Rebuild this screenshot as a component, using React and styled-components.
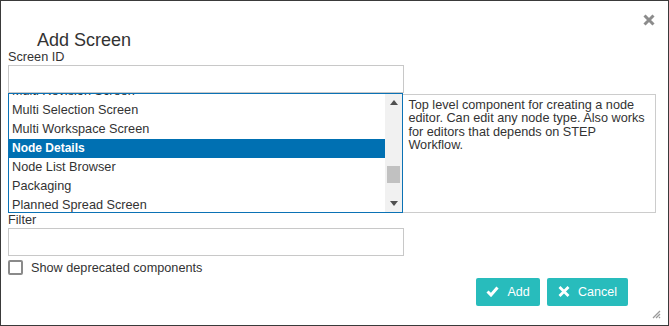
import React from "react";
import styled, { createGlobalStyle } from "styled-components";

const GlobalStyle = createGlobalStyle`
  html, body {
    margin: 0;
    padding: 0;
    background: #ffffff;
  }
  body {
    font-family: "Liberation Sans", Arial, sans-serif;
    color: #333333;
  }
`;

const Dialog = styled.div`
  position: relative;
  box-sizing: border-box;
  width: 669px;
  height: 326px;
  border: 1px solid #3a3a3a;
  background: #ffffff;
  padding: 0 12px 0 7px;
  display: flex;
  flex-direction: column;
`;

const CloseButton = styled.button`
  position: absolute;
  top: 13px;
  right: 13px;
  width: 12px;
  height: 12px;
  padding: 0;
  border: none;
  background: none;
  display: flex;
  cursor: pointer;
`;

const Grip = styled.div`
  position: absolute;
  right: 7px;
  bottom: 6px;
  width: 11px;
  height: 11px;
  display: flex;
`;

const Title = styled.h2`
  margin: 29px 0 0 29px;
  font-size: 18px;
  line-height: 20px;
  font-weight: normal;
  color: #333333;
`;

const Label = styled.label`
  display: block;
  font-size: 12.7px;
  line-height: 15px;
  color: #333333;
`;

const TextInput = styled.input`
  box-sizing: border-box;
  width: 396px;
  height: 28px;
  margin: 0;
  border: 1px solid #c8c8c8;
  background: #ffffff;
  padding: 0 6px;
  font: inherit;
  outline: none;
`;

const PickerRow = styled.div`
  display: flex;
  align-items: flex-start;
`;

const ListBox = styled.div`
  box-sizing: border-box;
  width: 396px;
  height: 120px;
  border: 1px solid #0b72b5;
  display: flex;
  overflow: hidden;
`;

const ListItems = styled.div`
  flex: 1;
  overflow: hidden;
`;

const ListInner = styled.div`
  margin-top: -12px;
`;

const Item = styled.div`
  height: 19px;
  line-height: 19px;
  padding-left: 3px;
  font-size: ${(p) => (p.$selected ? "12px" : "12.7px")};
  font-weight: ${(p) => (p.$selected ? "bold" : "normal")};
  color: ${(p) => (p.$selected ? "#ffffff" : "#333333")};
  background: ${(p) => (p.$selected ? "#0070b2" : "transparent")};
  white-space: nowrap;
`;

const ScrollBar = styled.div`
  width: 17px;
  background: #f1f1f1;
  display: flex;
  flex-direction: column;
`;

const ScrollArrow = styled.div`
  height: 17px;
  display: flex;
  align-items: center;
  justify-content: center;
`;

const ScrollTrack = styled.div`
  flex: 1;
  display: flex;
  justify-content: center;
`;

const Thumb = styled.div`
  width: 13px;
  height: 17px;
  margin-top: 55px;
  background: #c1c1c1;
`;

const Description = styled.div`
  box-sizing: border-box;
  width: 253px;
  height: 119px;
  margin-top: 1px;
  border: 1px solid #cccccc;
  border-left: none;
  padding: 4px 8px 0 5px;
  font-size: 12.7px;
  line-height: 13.3px;
  color: #333333;
`;

const CheckRow = styled.label`
  display: flex;
  align-items: center;
  gap: 8px;
  margin-top: 4px;
  font-size: 12.7px;
  color: #333333;
`;

const CheckBox = styled.span`
  box-sizing: border-box;
  width: 15px;
  height: 15px;
  border: 2px solid #8a8a8a;
  border-radius: 2px;
  background: #ffffff;
`;

const Actions = styled.div`
  display: flex;
  justify-content: flex-end;
  gap: 7px;
  margin-top: 3px;
  padding-right: 28px;
`;

const ActionButton = styled.button`
  box-sizing: border-box;
  height: 28px;
  width: ${(p) => p.$w}px;
  border: none;
  border-radius: 2px;
  background: #28bcbc;
  color: #ffffff;
  font-family: "Liberation Sans", Arial, sans-serif;
  font-size: 12.5px;
  display: flex;
  align-items: center;
  justify-content: center;
  gap: 8px;
  padding: 0 0 1px 0;
  cursor: pointer;
`;

const items = [
  "Multi Revision Screen",
  "Multi Selection Screen",
  "Multi Workspace Screen",
  "Node Details",
  "Node List Browser",
  "Packaging",
  "Planned Spread Screen",
];

export default function App() {
  return (
    <>
      <GlobalStyle />
      <Dialog>
        <CloseButton aria-label="Close">
          <svg width="12" height="12" viewBox="0 0 12 12">
            <path d="M1.5 1.5 L10.5 10.5 M10.5 1.5 L1.5 10.5" stroke="#8c8c8c" strokeWidth="3" />
          </svg>
        </CloseButton>

        <Title>Add Screen</Title>
        <Label>Screen ID</Label>
        <TextInput />

        <PickerRow>
          <ListBox>
            <ListItems>
              <ListInner>
                {items.map((it) => (
                  <Item key={it} $selected={it === "Node Details"}>
                    {it}
                  </Item>
                ))}
              </ListInner>
            </ListItems>
            <ScrollBar>
              <ScrollArrow>
                <svg width="8" height="5" viewBox="0 0 8 5">
                  <path d="M0 5 L4 0 L8 5 Z" fill="#505050" />
                </svg>
              </ScrollArrow>
              <ScrollTrack>
                <Thumb />
              </ScrollTrack>
              <ScrollArrow>
                <svg width="8" height="5" viewBox="0 0 8 5">
                  <path d="M0 0 L8 0 L4 5 Z" fill="#505050" />
                </svg>
              </ScrollArrow>
            </ScrollBar>
          </ListBox>
          <Description>
            Top level component for creating a node editor. Can edit any node
            type. Also works for editors that depends on STEP Workflow.
          </Description>
        </PickerRow>

        <Label>Filter</Label>
        <TextInput />

        <CheckRow>
          <CheckBox />
          Show deprecated components
        </CheckRow>

        <Actions>
          <ActionButton $w={64}>
            <svg width="13" height="11" viewBox="0 0 13 11">
              <path d="M1.5 5.5 L5 9 L11.5 1.5" stroke="#ffffff" strokeWidth="3" fill="none" />
            </svg>
            Add
          </ActionButton>
          <ActionButton $w={81}>
            <svg width="12" height="11" viewBox="0 0 12 11">
              <path d="M1.5 1 L10.5 10 M10.5 1 L1.5 10" stroke="#ffffff" strokeWidth="2.8" />
            </svg>
            Cancel
          </ActionButton>
        </Actions>

        <Grip>
          <svg width="11" height="11" viewBox="0 0 11 11">
            <path d="M10 3 L3 10 M10 6 L6 10 M10 9 L9 10" stroke="#9a9a9a" strokeWidth="1.3" />
          </svg>
        </Grip>
      </Dialog>
    </>
  );
}
